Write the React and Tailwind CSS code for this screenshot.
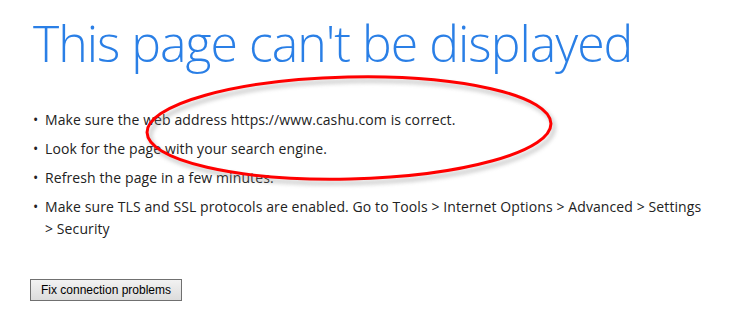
export default function App() {
  const items = [
    "Make sure the web address https://www.cashu.com is correct.",
    "Look for the page with your search engine.",
    "Refresh the page in a few minutes.",
    "Make sure TLS and SSL protocols are enabled. Go to Tools > Internet Options > Advanced > Settings > Security",
  ];
  return (
    <div className="relative w-[733px] h-[312px] bg-white overflow-hidden">
      <div className="pl-[33px] pt-[12px]">
        <h1 className="font-['Open_Sans',sans-serif] font-light text-[50px] leading-[62px] text-[#2a7fe6] tracking-[-1px] whitespace-nowrap">
          This page can't be displayed
        </h1>
        <ul className="mt-[35px] font-['Open_Sans',sans-serif] text-[14px] leading-[22px] tracking-[0.1px] text-[#222] flex flex-col gap-[7px]">
          {items.map((t, i) => (
            <li key={i} className="flex">
              <span className="w-[12px] shrink-0">•</span>
              <span className="w-[660px]">{t}</span>
            </li>
          ))}
        </ul>
        <button className="mt-[39px] ml-[-3px] h-[22px] w-[152px] border border-[#707070] bg-gradient-to-b from-[#f2f2f2] to-[#dcdcdc] font-['Liberation_Sans',Arial,sans-serif] text-[12px] text-black">
          Fix connection problems
        </button>
      </div>
      <svg className="absolute left-0 top-0 pointer-events-none" width="733" height="312">
        <defs>
          <filter id="sh" x="-10%" y="-30%" width="120%" height="160%">
            <feGaussianBlur stdDeviation="2" />
          </filter>
        </defs>
        <ellipse cx="352" cy="132" rx="202" ry="51" fill="none" stroke="#888" strokeWidth="3" opacity="0.55" filter="url(#sh)" transform="rotate(-1.3 352 132)" />
        <ellipse cx="349" cy="128" rx="202" ry="51" fill="none" stroke="#f00" strokeWidth="3" transform="rotate(-1.3 349 128)" />
      </svg>
    </div>
  );
}
